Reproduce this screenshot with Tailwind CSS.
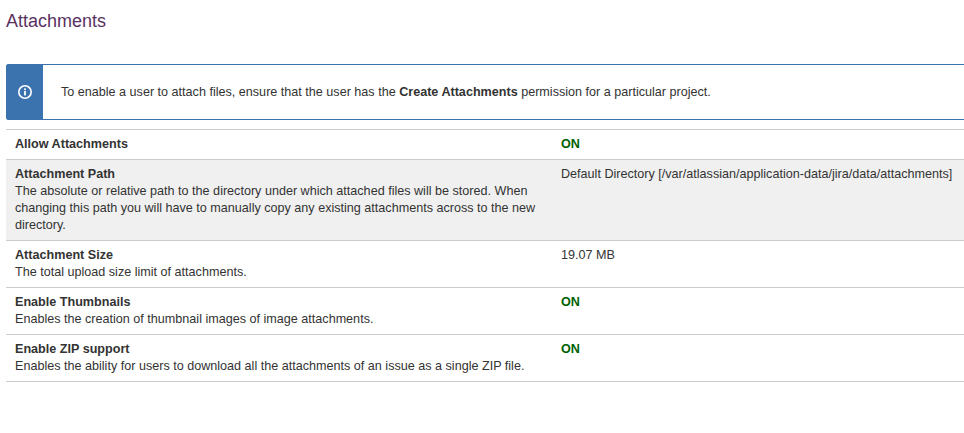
<!DOCTYPE html>
<html>
<head>
<script src="https://cdn.jsdelivr.net/npm/@tailwindcss/browser@4"></script>
</head>
<body class="bg-white font-['Liberation_Sans',Arial,sans-serif] text-[12.6px] leading-[17px] text-[#333]">
<div class="w-[964px] h-[433px] overflow-hidden pl-[6px]">
  <h2 class="pt-[11px] h-[64px] text-[18px] leading-[21px] font-normal text-[#59315f]">Attachments</h2>
  <div class="flex h-[56px] border-y border-[#3b73af] rounded-l-[3px]">
    <div class="w-[37px] -my-px bg-[#3b73af] rounded-l-[3px] flex items-center justify-center">
      <svg width="16" height="16" viewBox="0 0 16 16" fill="none">
        <circle cx="8" cy="8" r="6.2" stroke="#fff" stroke-width="1.6"/>
        <rect x="7.1" y="7" width="1.8" height="4.4" fill="#fff"/>
        <rect x="7.1" y="4.4" width="1.8" height="1.7" fill="#fff"/>
      </svg>
    </div>
    <p class="pl-[18px] pt-[1px] flex items-center">To enable a user to attach files, ensure that the user has the&nbsp;<strong class="font-bold">Create Attachments</strong>&nbsp;permission for a particular project.</p>
  </div>
  <div class="mt-[9px] border-t border-[#ccc]">
    <div class="flex h-[30px] border-b border-[#ccc] pt-[6px]">
      <div class="w-[546px] shrink-0 pl-[9px] font-bold">Allow Attachments</div>
      <div class="pl-[9px] font-bold text-[#006100]">ON</div>
    </div>
    <div class="flex h-[81px] border-b border-[#ccc] pt-[6px] bg-[#f0f0f0]">
      <div class="w-[546px] shrink-0 pl-[9px] pr-[6px]"><div class="font-bold">Attachment Path</div>The absolute or relative path to the directory under which attached files will be stored. When changing this path you will have to manually copy any existing attachments across to the new directory.</div>
      <div class="pl-[9px] whitespace-nowrap">Default Directory [/var/atlassian/application-data/jira/data/attachments]</div>
    </div>
    <div class="flex h-[47px] border-b border-[#ccc] pt-[6px]">
      <div class="w-[546px] shrink-0 pl-[9px]"><div class="font-bold">Attachment Size</div>The total upload size limit of attachments.</div>
      <div class="pl-[9px]">19.07 MB</div>
    </div>
    <div class="flex h-[47px] border-b border-[#ccc] pt-[6px]">
      <div class="w-[546px] shrink-0 pl-[9px]"><div class="font-bold">Enable Thumbnails</div>Enables the creation of thumbnail images of image attachments.</div>
      <div class="pl-[9px] font-bold text-[#006100]">ON</div>
    </div>
    <div class="flex h-[47px] border-b border-[#ccc] pt-[6px]">
      <div class="w-[546px] shrink-0 pl-[9px]"><div class="font-bold">Enable ZIP support</div>Enables the ability for users to download all the attachments of an issue as a single ZIP file.</div>
      <div class="pl-[9px] font-bold text-[#006100]">ON</div>
    </div>
  </div>
</div>
</body>
</html>
